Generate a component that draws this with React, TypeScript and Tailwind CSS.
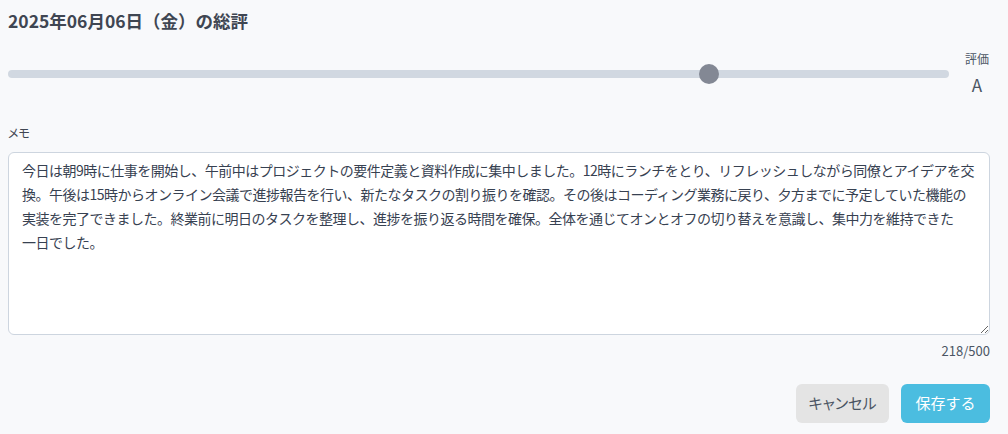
import { useState } from "react";

const memoText =
  "今日は朝9時に仕事を開始し、午前中はプロジェクトの要件定義と資料作成に集中しました。12時にランチをとり、リフレッシュしながら同僚とアイデアを交換。午後は15時からオンライン会議で進捗報告を行い、新たなタスクの割り振りを確認。その後はコーディング業務に戻り、夕方までに予定していた機能の実装を完了できました。終業前に明日のタスクを整理し、進捗を振り返る時間を確保。全体を通じてオンとオフの切り替えを意識し、集中力を維持できた\n一日でした。";

export default function App() {
  const [memo, setMemo] = useState(memoText);
  const value = 0.75;
  const count = memo.replace(/\n/g, "").length;

  return (
    <div
      className="min-h-screen w-full bg-[#f8f9fb] pl-2 pr-[18px] pt-[10px] text-[#374151]"
      style={{ fontFamily: '"Noto Sans CJK JP", "Noto Sans", sans-serif' }}
    >
      <h1 className="text-[17.5px] font-bold leading-[22px] text-[#3f4652]">
        2025年06月06日（金）の総評
      </h1>

      {/* rating slider */}
      <div className="mt-[19px] flex items-center gap-[15px]">
        <div className="relative h-[8px] flex-1 rounded-full bg-[#d1d8e1]">
          <div
            className="absolute top-1/2 h-[20px] w-[20px] -translate-x-1/2 -translate-y-1/2 rounded-full bg-[#838894]"
            style={{ left: `calc(10px + (100% - 20px) * ${value})` }}
          />
        </div>
        <div className="flex w-[26px] flex-col items-center">
          <span className="text-[12px] leading-[16px] text-[#4b5563]">評価</span>
          <span className="mt-[7px] text-[17px] leading-[22px] text-[#4b5563]">A</span>
        </div>
      </div>

      <div className="mt-[28px] text-[12px] leading-[18px] text-[#3f4652] [font-feature-settings:'palt']">
        メモ
      </div>

      <textarea
        value={memo}
        onChange={(e) => setMemo(e.target.value)}
        className="mt-[10px] block h-[183px] w-full resize-y rounded-[6px] border border-[#cdd5df] bg-white pl-[13px] pr-[13px] pt-[5px] text-[14px] leading-[24px] tracking-[-0.5px] text-[#374151] outline-none"
      />

      <div className="mt-[7px] text-right text-[13px] leading-[18px] text-[#4b5563]">
        {count}/500
      </div>

      <div className="mt-[24px] flex justify-end gap-[12px]">
        <button className="h-[39px] w-[93px] rounded-[6px] bg-[#e4e4e4] text-[15px] text-[#4b5563] [font-feature-settings:'palt']">
          キャンセル
        </button>
        <button className="h-[39px] w-[89px] rounded-[6px] bg-[#4bbde0] text-[15px] text-white">
          保存する
        </button>
      </div>
    </div>
  );
}
